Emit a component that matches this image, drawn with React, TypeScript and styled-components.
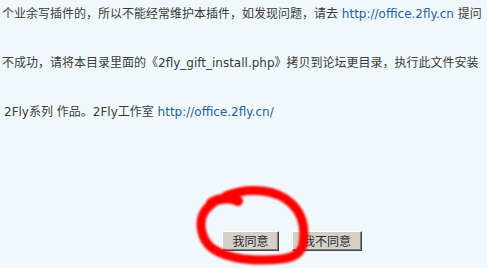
import React from "react";
import styled, { createGlobalStyle } from "styled-components";

const GlobalStyle = createGlobalStyle`
  html, body {
    margin: 0;
    padding: 0;
    background: #f1f8fc;
  }
  body {
    font-family: "DejaVu Sans", "Noto Sans CJK SC", sans-serif;
    font-size: 12px;
    color: #3a3a3a;
  }
`;

export default function App() {
  return (
    <>
      <GlobalStyle />
      <Page>
        <Notice>
          <Line>
            个业余写插件的，所以不能经常维护本插件，如发现问题，请去{" "}
            <Link href="#">http://office.2fly.cn</Link> 提问
          </Line>
          <Line>
            不成功，请将本目录里面的《2fly_gift_install.php》拷贝到论坛更目录，执行此文件安装
          </Line>
          <Line $indent>
            2Fly系列 作品。2Fly工作室 <Link href="#">http://office.2fly.cn/</Link>
          </Line>
        </Notice>
        <ButtonRow>
          <ClassicButton $width={57}>我同意</ClassicButton>
          <ClassicButton $width={70}>我不同意</ClassicButton>
        </ButtonRow>
        <Scribble viewBox="0 0 487 268" width="487" height="268">
          <defs>
            <filter id="soft">
              <feGaussianBlur stdDeviation="0.8" />
            </filter>
          </defs>
          <g
            fill="none"
            stroke="#ff0000"
            strokeLinecap="round"
            strokeLinejoin="round"
            filter="url(#soft)"
          >
            <path
              strokeWidth="9"
              d="M226 196 C 250 186, 278 190, 292 204 C 304 216, 305 232, 303 244 C 301 256, 290 260, 262 260 C 236 260, 212 254, 205 240 C 198 226, 200 212, 212 204"
            />
            <path strokeWidth="10" d="M211 203 C 218 198, 232 197, 238 201" />
          </g>
        </Scribble>
      </Page>
    </>
  );
}

const Page = styled.div`
  position: relative;
  width: 487px;
  height: 268px;
  overflow: hidden;
`;

const Notice = styled.div`
  padding: 4px 0 0 2px;
`;

const Line = styled.p<{ $indent?: boolean }>`
  margin: 0 0 29px;
  line-height: 20px;
  white-space: nowrap;
  padding-left: ${(p) => (p.$indent ? "2px" : "0")};
`;

const Link = styled.a`
  color: #1f5fa6;
  text-decoration: none;
`;

const ButtonRow = styled.div`
  display: flex;
  gap: 13px;
  padding: 80px 0 0 222px;
`;

const ClassicButton = styled.button<{ $width: number }>`
  width: ${(p) => p.$width}px;
  height: 20px;
  padding: 0;
  background: #d4d0c8;
  color: #2a2a2a;
  font-family: "Noto Sans CJK SC", sans-serif;
  font-size: 12px;
  line-height: 16px;
  border: 1px solid;
  border-color: #ffffff #404040 #404040 #ffffff;
  box-shadow: inset -1px -1px 0 #808080;
`;

const Scribble = styled.svg`
  position: absolute;
  left: 0;
  top: 0;
  pointer-events: none;
`;
